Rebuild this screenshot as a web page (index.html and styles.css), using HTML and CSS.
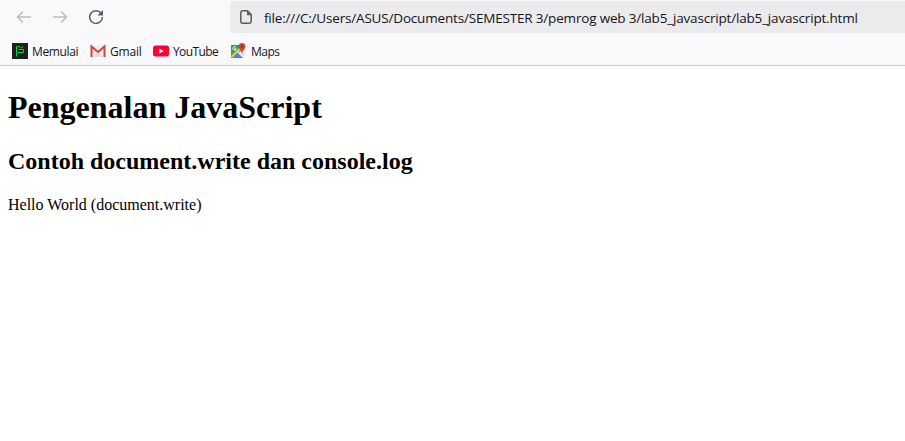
FILE: index.html
```html
<!DOCTYPE html>
<html lang="id">
<head>
<meta charset="utf-8">
<title>Pengenalan JavaScript</title>
<link rel="stylesheet" href="styles.css">
</head>
<body>
<header class="chrome">
  <div class="toolbar">
    <nav class="nav">
      <svg class="icon off" viewBox="0 0 16 16"><path d="M15 8H1.500M7 2.500 1.500 8 7 13.500"/></svg>
      <svg class="icon off" viewBox="0 0 16 16"><path d="M1 8h13.500M9 2.500l5.500 5.500L9 13.500"/></svg>
      <svg class="icon" viewBox="0 0 16 16"><path d="M13.200 4.300A6.400 6.400 0 1 0 14.400 8"/><path class="solid" d="M15 1v5.500H9.500z"/></svg>
    </nav>
    <div class="urlbar">
      <svg class="page-icon" viewBox="0 0 12 14"><path d="M2.500.8h5l3.700 3.700v7a1.700 1.700 0 0 1-1.700 1.700h-7A1.700 1.700 0 0 1 .8 11.500v-9A1.700 1.700 0 0 1 2.500.8z"/><path class="fold" d="M7 .8v4.400h4.400z"/></svg>
      <span class="url">file:///C:/Users/ASUS/Documents/SEMESTER 3/pemrog web 3/lab5_javascript/lab5_javascript.html</span>
    </div>
  </div>
  <div class="bookmarks">
    <a class="bookmark memulai">
      <svg viewBox="0 0 16 16"><path fill="#202020" d="M0 0h16v16H0z"/><path fill="none" stroke="#05d43c" d="M4.500 3v10.500M6 3.500h2l1.500 1.500 2-1.500M7 6.500h4.500v3H6"/></svg>
      <span>Memulai</span>
    </a>
    <a class="bookmark gmail">
      <svg viewBox="0 0 16 16"><path fill="#eee" d="M1 3h14v11H1z"/><path fill="#ddd" d="m3 14 5-5 5 5z"/><path fill="none" stroke="#d94339" stroke-width="2" d="M1.500 14V3.500L8 9l6.500-5.500V14"/></svg>
      <span>Gmail</span>
    </a>
    <a class="bookmark youtube">
      <svg viewBox="0 0 16 16"><rect y="2.500" width="16" height="11" rx="2.500" fill="#ff0033"/><path fill="#fff" d="m6.300 5.500 4.400 2.500-4.400 2.500z"/></svg>
      <span>YouTube</span>
    </a>
    <a class="bookmark maps">
      <svg viewBox="0 0 16 16"><path fill="#25a45b" d="M0 2h11v6L4 15H0z"/><path fill="#d8dce1" d="M8 8h5v7z"/><path fill="#4285f4" d="m6.500 8.500 6 6.500H1z"/><path fill="none" stroke="#fbc934" stroke-width="2" d="M.5 14 10 4.500"/><path fill="none" stroke="#f0f2f5" stroke-width="1.300" d="m6.500 8.500 6 6"/><path fill="none" stroke="#fff" d="M4.800 4.300a1.700 1.700 0 1 0 .4 1.500H3.500"/><path fill="#db4437" d="M11 0a3.500 3.500 0 0 1 3.500 3.500C14.500 6 11.500 7 11 11c-.5-4-3.500-5-3.500-7.500A3.500 3.500 0 0 1 11 0z"/><circle cx="11" cy="3.500" r="1.200" fill="#7b2720"/></svg>
      <span>Maps</span>
    </a>
  </div>
</header>
<main class="page">
  <h1>Pengenalan JavaScript</h1>
  <h2>Contoh document.write dan console.log</h2>
  <p>Hello World (document.write)</p>
</main>
</body>
</html>
```
FILE: styles.css
```css
body {
  margin: 0;
  background: #fff;
  color: #000;
  font-family: "Liberation Serif", serif;
}
.chrome {
  box-sizing: border-box;
  height: 66px;
  border-bottom: 1px solid #ccc;
  background: #f9f9fb;
  color: #15141a;
  font-family: "Open Sans", sans-serif;
  overflow: hidden;
}
.toolbar {
  display: flex;
  height: 33px;
  padding-top: 1px;
  box-sizing: border-box;
}
.nav {
  display: flex;
  align-items: center;
  gap: 20px;
  width: 214px;
  padding-left: 16px;
}
.icon {
  width: 16px;
  height: 16px;
  fill: none;
  stroke: #5b5b66;
  stroke-width: 1.5;
}
.off { stroke: #bdbdc1; }
.icon .solid { fill: #5b5b66; stroke: none; }
.urlbar {
  flex: 1;
  display: flex;
  align-items: center;
  gap: 12px;
  padding-left: 10px;
  border-radius: 4px 0 0 4px;
  background: #ebebed;
}
.page-icon {
  width: 12px;
  height: 14px;
  fill: none;
  stroke: #5b5b60;
  stroke-width: 1.5;
}
.page-icon .fold { fill: #5b5b60; stroke: none; }
.url {
  padding-top: 2px;
  font-size: 13.5px;
  letter-spacing: -0.18px;
  white-space: nowrap;
}
.bookmarks {
  display: flex;
  align-items: center;
  height: 36px;
  padding-left: 12px;
  font-size: 12px;
  letter-spacing: -0.35px;
}
.bookmark {
  display: flex;
  align-items: center;
  gap: 4px;
  white-space: nowrap;
}
.bookmark svg {
  flex: none;
  width: 16px;
  height: 16px;
}
.memulai { width: 78px; }
.gmail { width: 63px; letter-spacing: -0.2px; }
.youtube { width: 78px; letter-spacing: -0.6px; }
.maps { letter-spacing: -0.5px; }
.page { padding: 0 8px; }
h1 {
  margin: 23px 0 22px;
  font-size: 32px;
  line-height: 37px;
}
h2 {
  margin: 0 0 21px;
  font-size: 24px;
  line-height: 27px;
}
p {
  margin: 0;
  font-size: 16px;
  line-height: 18px;
}
```
